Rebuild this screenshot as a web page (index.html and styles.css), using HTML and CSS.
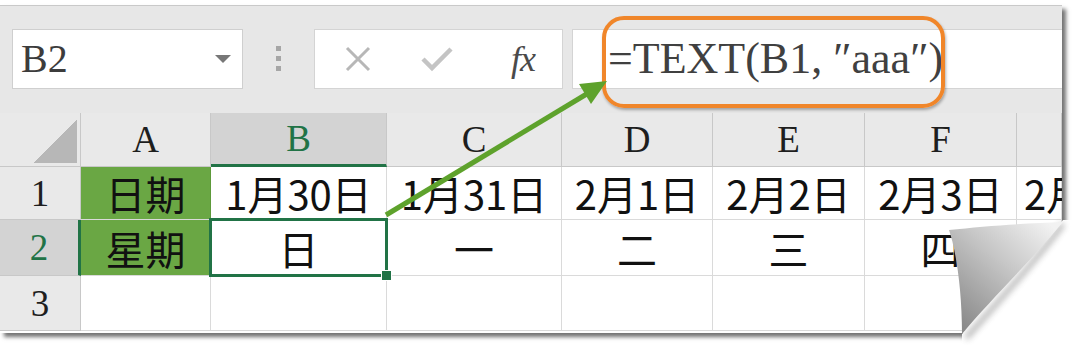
FILE: index.html
```html
<!DOCTYPE html>
<html lang="zh-CN">
<head>
  <meta charset="UTF-8">
  <title>TEXT 星期</title>
  <link rel="stylesheet" href="styles.css">
</head>
<body>
  <div class="shot">
    <div class="page">
      <div class="toolbar">
        <div class="namebox">
          <span>B2</span>
          <span class="caret"></span>
        </div>
        <div class="grip"><i></i><i></i><i></i></div>
        <div class="fx-buttons">
          <svg width="30" height="30" viewBox="0 0 30 30"><path d="M4 4 L26 26 M26 4 L4 26" stroke="#b7b7b7" stroke-width="3" fill="none"/></svg>
          <svg width="34" height="30" viewBox="0 0 34 30"><path d="M3 15 L12 24 L31 5" stroke="#c4c4c4" stroke-width="4.5" fill="none"/></svg>
          <span class="fx">fx</span>
        </div>
        <div class="formula">=TEXT(B1, ″aaa″)</div>
      </div>

      <div class="grid">
        <div class="corner"><span class="tri"></span></div>
        <div class="colhead">A</div>
        <div class="colhead active">B</div>
        <div class="colhead">C</div>
        <div class="colhead">D</div>
        <div class="colhead">E</div>
        <div class="colhead">F</div>
        <div class="colhead"></div>

        <div class="rowhead">1</div>
        <div class="cell green">日期</div>
        <div class="cell">1月30日</div>
        <div class="cell">1月31日</div>
        <div class="cell">2月1日</div>
        <div class="cell">2月2日</div>
        <div class="cell">2月3日</div>
        <div class="cell left">2月4日</div>

        <div class="rowhead active">2</div>
        <div class="cell green">星期</div>
        <div class="cell selected">日</div>
        <div class="cell">一</div>
        <div class="cell">二</div>
        <div class="cell">三</div>
        <div class="cell">四</div>
        <div class="cell"></div>

        <div class="rowhead">3</div>
        <div class="cell"></div>
        <div class="cell"></div>
        <div class="cell"></div>
        <div class="cell"></div>
        <div class="cell"></div>
        <div class="cell"></div>
        <div class="cell"></div>
      </div>
    </div>

    <div class="callout"></div>

    <svg class="overlay" width="1080" height="352" viewBox="0 0 1080 352">
      <defs>
        <linearGradient id="flap" gradientUnits="userSpaceOnUse" x1="1050" y1="224" x2="958" y2="322">
          <stop offset="0" stop-color="#f2f2f2"/>
          <stop offset="0.45" stop-color="#c6c6c6"/>
          <stop offset="1" stop-color="#8a8a8a"/>
        </linearGradient>
        <filter id="soft" x="-20%" y="-20%" width="140%" height="140%">
          <feGaussianBlur stdDeviation="3"/>
        </filter>
      </defs>

      <!-- arrow -->
      <line x1="386" y1="215" x2="590" y2="92" stroke="#5ea22c" stroke-width="5"/>
      <polygon points="607,81 591,104 579,84" fill="#5ea22c"/>

      <!-- page curl -->
      <polygon points="1063,220 1080,220 1080,352 962,352 962,334" fill="#ffffff"/>
      <path d="M1063,224 C1040,256 1000,300 966,338" stroke="#555" stroke-width="5" fill="none" opacity="0.45" filter="url(#soft)"/>
      <path d="M1063,222 C1030,223 985,226 949,230 C956,250 962,290 962,334 C990,300 1030,262 1063,222 Z" fill="url(#flap)"/>
    </svg>
  </div>
</body>
</html>
```

FILE: styles.css
```css
* {
  box-sizing: border-box;
}

body {
  margin: 0;
  background-color: #ffffff;
  font-family: "Liberation Serif", serif;
}

.shot {
  position: relative;
  width: 1080px;
  height: 352px;
  overflow: hidden;
}

.page {
  width: 1062px;
  margin-top: 5px;
  padding-bottom: 2px;
  background-color: #ffffff;
  border-top: 1px solid #c9c9c9;
  box-shadow: 4px 4px 4px rgba(0, 0, 0, 0.55);
  overflow: hidden;
}

/* formula bar */
.toolbar {
  height: 107px;
  background-color: #e7e7e7;
  display: flex;
  align-items: center;
  padding-left: 12px;
  padding-bottom: 2px;
}

.namebox {
  width: 231px;
  height: 60px;
  background-color: #ffffff;
  border: 1px solid #cfcfcf;
  display: flex;
  align-items: center;
  justify-content: space-between;
  padding: 0 11px 0 8px;
  font-size: 40px;
  line-height: 1;
  color: #3c3c3c;
}

.caret {
  width: 0;
  height: 0;
  border-left: 8px solid transparent;
  border-right: 8px solid transparent;
  border-top: 8px solid #777777;
}

.grip {
  width: 71px;
  display: flex;
  flex-direction: column;
  align-items: center;
  gap: 5px;
}

.grip i {
  display: block;
  width: 5px;
  height: 5px;
  background-color: #a6a6a6;
}

.fx-buttons {
  width: 249px;
  height: 60px;
  background-color: #ffffff;
  border: 1px solid #d4d4d4;
  display: flex;
  align-items: center;
  padding-left: 28px;
  gap: 47px;
}

.fx {
  font-style: italic;
  font-size: 36px;
  line-height: 1;
  color: #4a4a4a;
  margin-left: 10px;
  letter-spacing: -1px;
}

.formula {
  flex: 1;
  height: 60px;
  margin-left: 9px;
  background-color: #ffffff;
  border: 1px solid #d4d4d4;
  border-right: none;
  display: flex;
  align-items: center;
  padding-left: 35px;
  font-size: 44px;
  line-height: 1;
  color: #404040;
  white-space: pre;
}

/* sheet */
.grid {
  display: grid;
  grid-template-columns: 81px 130px 176px 175px 151px 152px 152px 45px;
  grid-template-rows: 54px 53px 56px 55px;
}

.corner,
.colhead,
.rowhead {
  background-color: #e9e9e9;
  border-right: 1px solid #c8c8c8;
  border-bottom: 1px solid #c8c8c8;
  display: flex;
  align-items: center;
  justify-content: center;
  font-size: 37px;
  line-height: 1;
  color: #1e1e1e;
}

.corner {
  align-items: flex-end;
  justify-content: flex-end;
  padding: 0 3px 3px 0;
}

.tri {
  width: 44px;
  height: 43px;
  background: linear-gradient(to bottom right, transparent 50%, #b7b7b7 50%);
}

.colhead.active {
  background-color: #d3d3d3;
  color: #217346;
  border-bottom: 3px solid #217346;
}

.rowhead.active {
  background-color: #d3d3d3;
  color: #217346;
  border-right: 3px solid #217346;
}

.cell {
  border-right: 1px solid #dadada;
  border-bottom: 1px solid #dadada;
  display: flex;
  align-items: center;
  justify-content: center;
  font-family: "Noto Sans CJK SC", "Noto Sans", sans-serif;
  font-size: 40px;
  line-height: 1;
  color: #111111;
  white-space: nowrap;
}

.cell.left {
  justify-content: flex-start;
  padding-left: 7px;
}

.cell.green {
  background-color: #6aa744;
  border-right-color: #5d9a3a;
}

.cell.selected {
  position: relative;
}

.cell.selected::before {
  content: "";
  position: absolute;
  top: -2px;
  left: -2px;
  right: -2px;
  bottom: -2px;
  border: 3px solid #217346;
}

.cell.selected::after {
  content: "";
  position: absolute;
  right: -6px;
  bottom: -6px;
  width: 9px;
  height: 9px;
  background-color: #217346;
  border: 1px solid #ffffff;
}

/* annotations */
.callout {
  position: absolute;
  left: 602px;
  top: 16px;
  width: 343px;
  height: 92px;
  border: 4px solid #f0862a;
  border-radius: 22px;
  box-shadow: 1px 2px 3px rgba(0, 0, 0, 0.3);
}

.overlay {
  position: absolute;
  left: 0;
  top: 0;
}
```
